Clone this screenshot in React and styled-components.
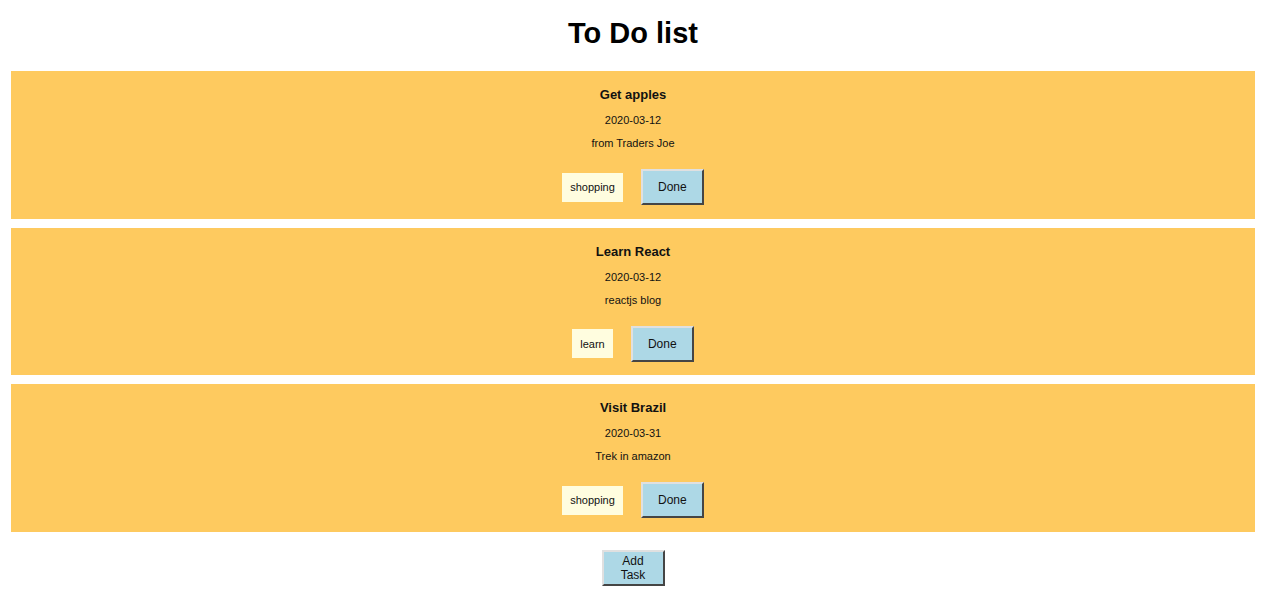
import React from 'react';
import styled, { createGlobalStyle } from 'styled-components';

const GlobalStyle = createGlobalStyle`
  body {
    margin: 0;
    background: #ffffff;
    font-family: "Liberation Sans", Arial, sans-serif;
    color: #111;
  }
`;

const Page = styled.div`
  padding: 14px 15px 0 11px;
  text-align: center;
`;

const Heading = styled.h1`
  margin: 0 0 19px;
  font-size: 29px;
  line-height: 38px;
  font-weight: bold;
  color: #000;
`;

const List = styled.div`
  display: flex;
  flex-direction: column;
  gap: 9px;
`;

const Card = styled.div`
  background: #feca5f;
  height: 147.5px;
  box-sizing: border-box;
  padding-top: 15px;
  display: flex;
  flex-direction: column;
  align-items: center;
`;

const Title = styled.div`
  font-size: 13px;
  font-weight: bold;
  line-height: 17px;
`;

const DateText = styled.div`
  margin-top: 10px;
  font-size: 11px;
  line-height: 14px;
`;

const Note = styled.div`
  margin-top: 9px;
  font-size: 11px;
  line-height: 14px;
`;

const Actions = styled.div`
  margin-top: 19px;
  display: flex;
  align-items: center;
  gap: 18px;
`;

const Tag = styled.span`
  display: flex;
  align-items: center;
  justify-content: center;
  height: 29px;
  padding: 0 8px;
  background: #fffddf;
  font-size: 11px;
`;

const Button = styled.button`
  width: 63px;
  height: 36px;
  padding: 0 8px;
  background: #add8e6;
  border: 2px outset #e0e0e0;
  border-right-color: #999;
  border-bottom-color: #999;
  font-family: "Liberation Sans", Arial, sans-serif;
  font-size: 12px;
  line-height: 14px;
  color: #111;
`;

const Footer = styled.div`
  margin-top: 18px;
  display: flex;
  justify-content: center;
`;

const tasks = [
  { title: 'Get apples', date: '2020-03-12', note: 'from Traders Joe', tag: 'shopping' },
  { title: 'Learn React', date: '2020-03-12', note: 'reactjs blog', tag: 'learn' },
  { title: 'Visit Brazil', date: '2020-03-31', note: 'Trek in amazon', tag: 'shopping' },
];

function App() {
  return (
    <Page>
      <GlobalStyle />
      <Heading>To Do list</Heading>
      <List>
        {tasks.map(t => (
          <Card key={t.title}>
            <Title>{t.title}</Title>
            <DateText>{t.date}</DateText>
            <Note>{t.note}</Note>
            <Actions>
              <Tag>{t.tag}</Tag>
              <Button>Done</Button>
            </Actions>
          </Card>
        ))}
      </List>
      <Footer>
        <Button>Add Task</Button>
      </Footer>
    </Page>
  );
}

export default App;
